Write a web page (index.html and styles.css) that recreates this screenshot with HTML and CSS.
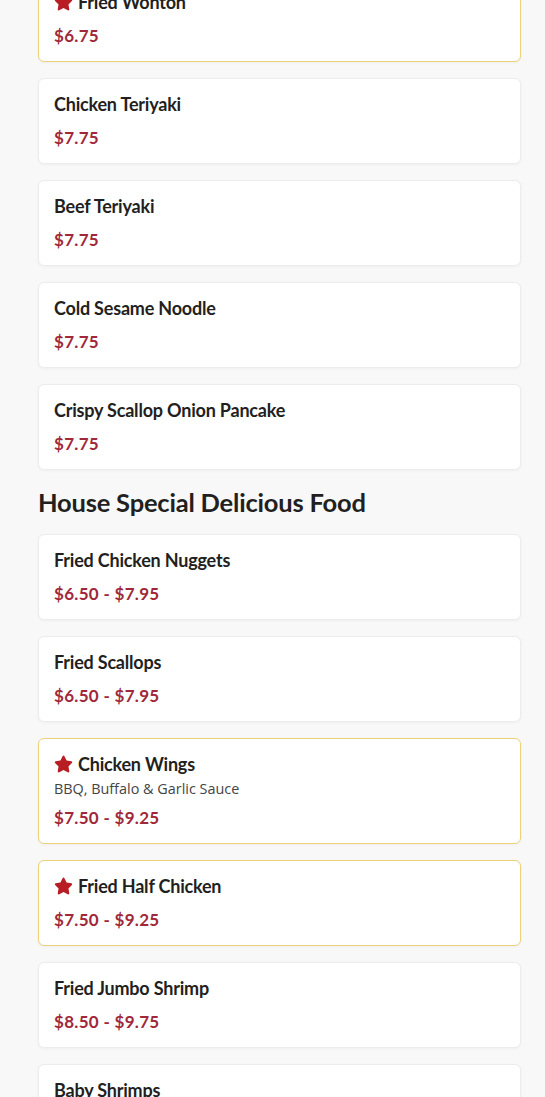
FILE: index.html
```html
<!DOCTYPE html>
<html lang="en">
<head>
    <meta charset="UTF-8">
    <meta name="viewport" content="width=device-width, initial-scale=1.0">
    <title>Menu</title>
    <link rel="stylesheet" href="styles.css">
</head>
<body>
    <main class="menu">
        <div class="item featured">
            <h3 class="item-name"><svg class="star" viewBox="0 0 576 512"><path d="M316.9 18C311.6 7 300.4 0 288.1 0s-23.4 7-28.8 18L195 150.3 51.4 171.5c-12 1.8-22 10.2-25.7 21.7s-.7 24.2 7.9 32.7L137.8 329 113.2 474.7c-2 12 3 24.2 12.9 31.3s23 8 33.8 2.3l128.3-68.5 128.3 68.5c10.8 5.7 23.9 4.9 33.8-2.3s14.9-19.3 12.9-31.3L438.5 329 542.7 225.9c8.6-8.5 11.7-21.2 7.9-32.7s-13.7-19.9-25.7-21.7L381.2 150.3 316.9 18z"/></svg>Fried Wonton</h3>
            <div class="price">$6.75</div>
        </div>
        <div class="item">
            <h3 class="item-name">Chicken Teriyaki</h3>
            <div class="price">$7.75</div>
        </div>
        <div class="item">
            <h3 class="item-name">Beef Teriyaki</h3>
            <div class="price">$7.75</div>
        </div>
        <div class="item">
            <h3 class="item-name">Cold Sesame Noodle</h3>
            <div class="price">$7.75</div>
        </div>
        <div class="item">
            <h3 class="item-name">Crispy Scallop Onion Pancake</h3>
            <div class="price">$7.75</div>
        </div>

        <h2 class="section-title">House Special Delicious Food</h2>

        <div class="item">
            <h3 class="item-name">Fried Chicken Nuggets</h3>
            <div class="price">$6.50 - $7.95</div>
        </div>
        <div class="item">
            <h3 class="item-name">Fried Scallops</h3>
            <div class="price">$6.50 - $7.95</div>
        </div>
        <div class="item featured">
            <h3 class="item-name"><svg class="star" viewBox="0 0 576 512"><path d="M316.9 18C311.6 7 300.4 0 288.1 0s-23.4 7-28.8 18L195 150.3 51.4 171.5c-12 1.8-22 10.2-25.7 21.7s-.7 24.2 7.9 32.7L137.8 329 113.2 474.7c-2 12 3 24.2 12.9 31.3s23 8 33.8 2.3l128.3-68.5 128.3 68.5c10.8 5.7 23.9 4.9 33.8-2.3s14.9-19.3 12.9-31.3L438.5 329 542.7 225.9c8.6-8.5 11.7-21.2 7.9-32.7s-13.7-19.9-25.7-21.7L381.2 150.3 316.9 18z"/></svg>Chicken Wings</h3>
            <p class="item-desc">BBQ, Buffalo &amp; Garlic Sauce</p>
            <div class="price">$7.50 - $9.25</div>
        </div>
        <div class="item featured">
            <h3 class="item-name"><svg class="star" viewBox="0 0 576 512"><path d="M316.9 18C311.6 7 300.4 0 288.1 0s-23.4 7-28.8 18L195 150.3 51.4 171.5c-12 1.8-22 10.2-25.7 21.7s-.7 24.2 7.9 32.7L137.8 329 113.2 474.7c-2 12 3 24.2 12.9 31.3s23 8 33.8 2.3l128.3-68.5 128.3 68.5c10.8 5.7 23.9 4.9 33.8-2.3s14.9-19.3 12.9-31.3L438.5 329 542.7 225.9c8.6-8.5 11.7-21.2 7.9-32.7s-13.7-19.9-25.7-21.7L381.2 150.3 316.9 18z"/></svg>Fried Half Chicken</h3>
            <div class="price">$7.50 - $9.25</div>
        </div>
        <div class="item">
            <h3 class="item-name">Fried Jumbo Shrimp</h3>
            <div class="price">$8.50 - $9.75</div>
        </div>
        <div class="item">
            <h3 class="item-name">Baby Shrimps</h3>
            <div class="price">$8.50 - $9.75</div>
        </div>
    </main>
</body>
</html>
```

FILE: styles.css
```css
:root {
    --bg: #f8f8f8;
    --text: #231f20;
    --muted: #444;
    --price: #a0283a;
    --star: #b81d24;
    --gold: #ecd07a;
    --border: #ececec;
    --radius: 6px;
}

* {
    margin: 0;
    padding: 0;
    box-sizing: border-box;
}

body {
    font-family: Lato, 'Open Sans', sans-serif;
    background-color: var(--bg);
    color: var(--text);
}

.menu {
    display: flex;
    flex-direction: column;
    gap: 16px;
    margin-top: -24px;
    padding: 0 24px 40px 38px;
}

.item {
    background-color: #fff;
    border: 1px solid var(--border);
    border-radius: var(--radius);
    box-shadow: 0 1px 3px rgba(0, 0, 0, 0.04);
    padding: 13px 15px 14px;
}

.item.featured {
    border-color: var(--gold);
}

.item-name {
    display: flex;
    align-items: center;
    gap: 5px;
    font-size: 18px;
    font-weight: 700;
    line-height: 24px;
    letter-spacing: -0.2px;
}

.star {
    width: 19px;
    height: 18px;
    fill: var(--star);
}

.item-desc {
    margin-top: 3px;
    font-family: 'Open Sans', sans-serif;
    font-size: 14.4px;
    line-height: 20px;
    color: var(--muted);
}

.price {
    margin-top: 11px;
    font-size: 17px;
    font-weight: 700;
    line-height: 22px;
    letter-spacing: 0.3px;
    color: var(--price);
}

.item-desc + .price {
    margin-top: 8px;
}

.section-title {
    font-size: 25.5px;
    font-weight: 700;
    line-height: 32px;
    letter-spacing: -0.2px;
}
```
